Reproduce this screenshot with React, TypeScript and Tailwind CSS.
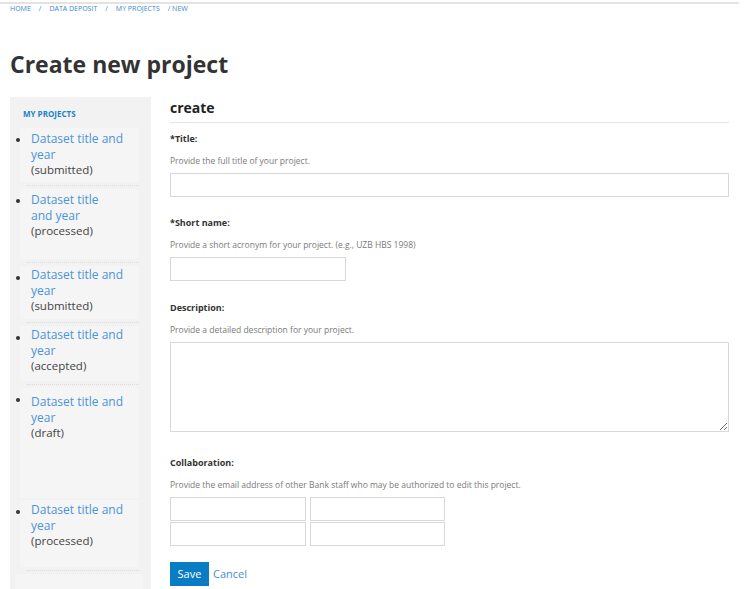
/**
 * Data deposit: create new project page
 * Sidebar list of the user's projects + the "create" form.
 */
type Project = {
  title: string;
  status: string;
  h: string; // box height
  pt?: string;
  narrow?: boolean;
  sep: boolean;
};

const projects: Project[] = [
  { title: "Dataset title and year", status: "(submitted)", h: "h-[54px]", sep: true },
  { title: "Dataset title and year", status: "(processed)", h: "h-[70px]", narrow: true, sep: true },
  { title: "Dataset title and year", status: "(submitted)", h: "h-[53px]", pt: "pt-[1px]", sep: true },
  { title: "Dataset title and year", status: "(accepted)", h: "h-[55px]", pt: "pt-[1px]", sep: true },
  { title: "Dataset title and year", status: "(draft)", h: "h-[110px]", pt: "pt-[6px]", sep: false },
  { title: "Dataset title and year", status: "(processed)", h: "h-[67px]", pt: "pt-[2px]", sep: true },
];

function ProjectItem({ p }: { p: Project }) {
  return (
    <>
      <div className="flex">
        {/* bullet */}
        <div className="w-[10px] shrink-0 pl-[6px] pt-[10px]">
          <div className="h-[4px] w-[4px] rounded-full bg-[#333]" />
        </div>
        <div className={`w-[119px] bg-[#f5f5f5] pl-[11px] ${p.h} ${p.pt ?? "pt-[3px]"}`}>
          <a
            href="#"
            className={`block text-[12px] leading-[16px] text-[#4a94d8] ${p.narrow ? "w-[74px]" : ""}`}
          >
            {p.title}
          </a>
          <div className="text-[11.5px] leading-[14px] text-[#444]">{p.status}</div>
        </div>
      </div>
      {p.sep ? (
        <div className="my-[3px] ml-[17px] w-[112px] border-t border-dotted border-[#dcdcdc]" />
      ) : (
        <div className="h-[2px]" />
      )}
    </>
  );
}

function Field({
  label,
  help,
  children,
  className,
}: {
  label: string;
  help: string;
  children: React.ReactNode;
  className: string;
}) {
  return (
    <div className={className}>
      <div className="text-[9px] font-bold leading-[12px] text-[#333]">{label}</div>
      <p className="mt-[11px] text-[8.5px] leading-[10px] text-[#7a7a7a]">{help}</p>
      <div className="mt-[7px]">{children}</div>
    </div>
  );
}

const inputCls = "block h-[24px] border border-[#d8d8d8] bg-white outline-none";

export default function App() {
  return (
    <div className="min-h-[589px] bg-white font-['Open_Sans',sans-serif] text-[#333]">
      <div className="mt-[2px] w-[739px] border-t-2 border-[#e3e3e3]">
        {/* breadcrumb */}
        <nav className="flex gap-[8px] pl-[10px] text-[7px] uppercase leading-[10px] text-[#3a86cc]">
          <a href="#">Home</a>
          <span>/</span>
          <a href="#">Data Deposit</a>
          <span>/</span>
          <a href="#">My Projects</a>
          <span>/ New</span>
        </nav>

        <h1 className="mt-[34px] pl-[10px] text-[23px] font-bold leading-[32px] text-[#333]">
          Create new project
        </h1>

        <div className="mt-[17px] flex items-start">
          {/* sidebar */}
          <aside className="ml-[10px] h-[500px] w-[141px] shrink-0 overflow-hidden bg-[#f2f2f2]">
            <h3 className="pl-[13px] pt-[12px] text-[8px] font-bold uppercase leading-[10px] text-[#1f82c9]">
              My Projects
            </h3>
            <div className="mt-[9px]">
              {projects.map((p, i) => (
                <ProjectItem key={i} p={p} />
              ))}
              <div className="ml-[5px] h-[30px] w-[128px] bg-[#f5f5f5]" />
            </div>
          </aside>

          {/* form */}
          <main className="ml-[19px] w-[559px]">
            <h2 className="border-b border-[#e5e5e5] pb-[4px] pt-[1px] text-[14px] font-bold leading-[20px] text-[#222]">
              create
            </h2>

            <Field label="*Title:" help="Provide the full title of your project." className="mt-[10px]">
              <input className={`${inputCls} w-[559px]`} />
            </Field>

            <Field
              label="*Short name:"
              help="Provide a short acronym for your project. (e.g., UZB HBS 1998)"
              className="mt-[20px]"
            >
              <input className={`${inputCls} w-[176px]`} />
            </Field>

            <Field
              label="Description:"
              help="Provide a detailed description for your project."
              className="mt-[21px]"
            >
              <textarea className="block h-[90px] w-[559px] border border-[#d8d8d8] bg-white outline-none" />
            </Field>

            <Field
              label="Collaboration:"
              help="Provide the email address of other Bank staff who may be authorized to edit this project."
              className="mt-[25px]"
            >
              <div className="grid w-[275px] grid-cols-[136px_135px] gap-x-[4px] gap-y-[1px]">
                <input className={`${inputCls} w-full`} />
                <input className={`${inputCls} w-full`} />
                <input className={`${inputCls} w-full`} />
                <input className={`${inputCls} w-full`} />
              </div>
            </Field>

            <div className="mt-[16px] flex items-center gap-[4px]">
              <button className="h-[24px] w-[39px] bg-[#0a7cc4] text-[11px] text-white">Save</button>
              <a href="#" className="text-[11px] text-[#3f8fd4]">
                Cancel
              </a>
            </div>
          </main>
        </div>
      </div>
    </div>
  );
}
